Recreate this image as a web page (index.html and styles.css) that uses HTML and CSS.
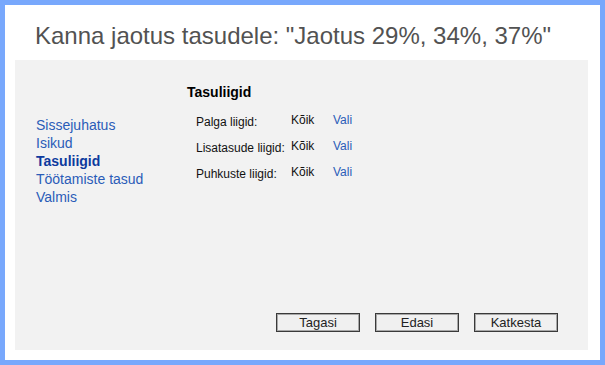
FILE: index.html
```html
<!DOCTYPE html>
<html lang="et">
<head>
<meta charset="UTF-8">
<title>Kanna jaotus tasudele</title>
<link rel="stylesheet" href="styles.css">
</head>
<body>
<div class="dialog">
    <h1 class="title">Kanna jaotus tasudele: "Jaotus 29%, 34%, 37%"</h1>

    <div class="panel">
        <div class="wizard">
            <ul class="steps">
                <li><a href="#">Sissejuhatus</a></li>
                <li><a href="#">Isikud</a></li>
                <li><a href="#" class="current">Tasuliigid</a></li>
                <li><a href="#">Töötamiste tasud</a></li>
                <li><a href="#">Valmis</a></li>
            </ul>

            <div class="step-body">
                <h2>Tasuliigid</h2>
                <div class="types">
                    <span class="type-label">Palga liigid:</span>
                    <span class="type-value">Kõik</span>
                    <a href="#" class="type-pick">Vali</a>

                    <span class="type-label">Lisatasude liigid:</span>
                    <span class="type-value">Kõik</span>
                    <a href="#" class="type-pick">Vali</a>

                    <span class="type-label">Puhkuste liigid:</span>
                    <span class="type-value">Kõik</span>
                    <a href="#" class="type-pick">Vali</a>
                </div>
            </div>
        </div>

        <div class="buttons">
            <button type="button">Tagasi</button>
            <button type="button">Edasi</button>
            <button type="button">Katkesta</button>
        </div>
    </div>
</div>
</body>
</html>
```

FILE: styles.css
```css
html, body {
    margin: 0;
    padding: 0;
    height: 100%;
}

body {
    background-color: #78a8fc;
    font-family: "Liberation Sans", Arial, sans-serif;
    padding: 5px;
    box-sizing: border-box;
}

.dialog {
    background-color: #fff;
    height: 355px;
    padding: 17px 12px 10px 10px;
    box-sizing: border-box;
    display: flex;
    flex-direction: column;
}

.title {
    margin: 0 0 10px 20px;
    font-size: 24px;
    font-weight: normal;
    line-height: 28px;
    color: #525252;
}

.panel {
    flex: 1;
    background-color: #f2f2f2;
    padding: 23px 30px 18px 21px;
    display: flex;
    flex-direction: column;
}

.wizard {
    flex: 1;
    display: flex;
}

.steps {
    list-style: none;
    margin: 33px 0 0 0;
    padding: 0;
    width: 151px;
    font-size: 14px;
    line-height: 18px;
}

.steps a {
    color: #2a5cb8;
    text-decoration: none;
}

.steps a.current {
    color: #0d3a9e;
    font-weight: bold;
}

.step-body h2 {
    margin: 0 0 10px 0;
    font-size: 14px;
    line-height: 18px;
    color: #000;
}

.types {
    display: grid;
    grid-template-columns: 95px 42px auto;
    row-gap: 6px;
    margin-left: 9px;
    font-size: 12px;
    line-height: 18px;
    align-items: start;
}

.type-label {
    padding-top: 2px;
    color: #111;
}

.type-value {
    color: #111;
}

.type-pick {
    color: #2a5cb8;
    text-decoration: none;
}

.buttons {
    display: flex;
    justify-content: flex-end;
    gap: 15px;
}

.buttons button {
    width: 84px;
    height: 19px;
    padding: 0;
    font-family: "Liberation Sans", Arial, sans-serif;
    font-size: 13px;
    color: #222;
    background-color: #f0f0f0;
    border: 1px solid #3a3a3a;
    box-shadow: inset 0 0 0 1px #a8a8a8;
}
```
